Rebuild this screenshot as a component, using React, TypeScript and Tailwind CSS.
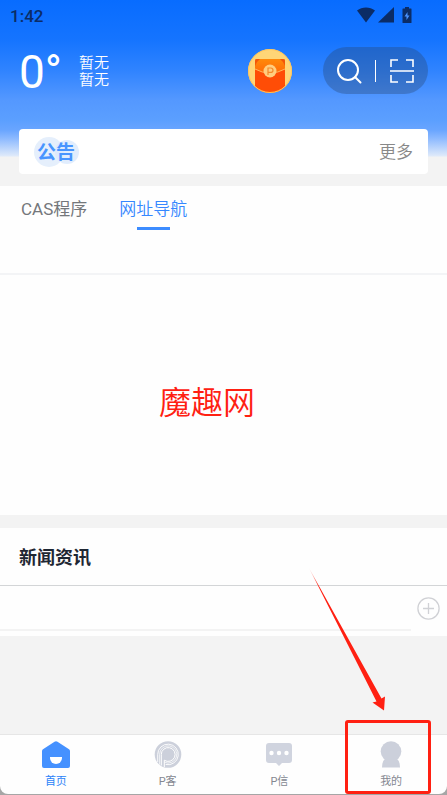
import type { ReactNode } from 'react';

function StatusBar() {
  return (
    <div className="flex h-8 items-center justify-between pl-[10px] pr-[35px] text-[#0b2c66]">
      <span className="text-[17px] leading-5 font-medium">1:42</span>
      <div className="flex items-center gap-[3px] pb-[2px]">
        <svg width="18" height="16" viewBox="0 0 18 16" fill="currentColor" aria-label="Wi-Fi">
          <path d="M0 3.600C5.200-.6 12.800-.6 18 3.600L9 15.500z" />
        </svg>
        <svg width="16" height="16" viewBox="0 0 16 16" fill="currentColor" aria-label="信号">
          <path d="M16 0v15.500H0z" />
        </svg>
        <svg className="ml-[5px]" width="10" height="16" viewBox="0 0 10 16" aria-label="电量">
          <path d="M3 0h4v1.500h2q.500 0 .500.500v13.500q0 .500-.500.500H1q-.500 0-.500-.500V2q0-.500.500-.500h2z" fill="currentColor" />
          <path d="M5.500 5L2.500 9.500h2V13l3-4.500h-2z" fill="#4b93ff" />
        </svg>
      </div>
    </div>
  );
}

function RedPacket() {
  return (
    <svg width="44" height="44" viewBox="0 0 44 44" aria-hidden="true">
      <defs>
        <linearGradient id="flap" x1="0" y1="0" x2="0" y2="1">
          <stop offset="0" stopColor="#ff8a0a" />
          <stop offset="1" stopColor="#ff6a08" />
        </linearGradient>
        <clipPath id="coin">
          <circle cx="22" cy="22" r="22" />
        </clipPath>
      </defs>
      <circle cx="22" cy="22" r="22" fill="#ffd677" />
      <g clipPath="url(#coin)">
        <path d="M7 12q0-2 2-2h26q2 0 2 2v25q0 7-15 7T7 37z" fill="#ff4d06" />
        <path d="M7 12q0-2 2-2h26q2 0 2 2v8q-7 4-15 4T7 20z" fill="url(#flap)" />
        <path d="M7 12q0-2 2-2h3l-3 3-2 4zM37 12q0-2-2-2h-3l3 3 2 4z" fill="#f2550a" />
        <path d="M7 20q7 4 15 4t15-4" fill="none" stroke="#ffb45c" strokeWidth="1" />
      </g>
      <circle cx="22" cy="22" r="6.500" fill="#ffce80" />
      <path d="M20 26v-7h2.800a2.200 2.200 0 0 1 0 4.400H20" fill="none" stroke="#f48a2c" strokeWidth="1.200" />
      <circle cx="22" cy="22" r="21.500" fill="none" stroke="#ffc55c" />
    </svg>
  );
}

function Header() {
  return (
    <header className="bg-[linear-gradient(180deg,#086cff_0px,#1574ff_40px,#2f83ff_70px,#5498ff_100px,#5b9fff_120px,#69a5ff_130px,#8ab8ff_138px,#dfeafa_156px,#f3f3f3_157px)] pb-3">
      <StatusBar />
      <div className="flex h-[97px] items-start pt-[15px] pr-[19px] pl-[19px]">
        <div className="w-10 text-[46px] leading-[50px] text-white">0°</div>
        <div className="mt-2 ml-5 text-[15px] leading-[17px] font-[350] text-white">
          <p>暂无</p>
          <p>暂无</p>
        </div>
        <button type="button" aria-label="红包" className="mt-[2px] mr-[31px] ml-auto">
          <RedPacket />
        </button>
        <div className="flex h-[47px] w-[105px] items-center justify-between rounded-full bg-[#28466e]/35 px-[13px]">
          <button type="button" aria-label="搜索">
            <svg width="26" height="26" viewBox="0 0 26 26" fill="none" stroke="#fff" strokeWidth="2">
              <circle cx="12" cy="12" r="10" />
              <path d="M19 19l5.500 5.500" strokeLinecap="round" />
            </svg>
          </button>
          <span className="h-[22px] w-px bg-white" />
          <button type="button" aria-label="扫一扫">
            <svg width="26" height="26" viewBox="0 0 26 26" fill="none" stroke="#fff" strokeWidth="1.600">
              <path d="M2 9V2h7M17 2h7v7M24 17v7h-7M9 24H2v-7M1 13h24" />
            </svg>
          </button>
        </div>
      </div>
      <div className="mx-[19px] flex h-[45px] items-center justify-between rounded-[4px] bg-white px-[15px]">
        <h2 className="relative isolate flex h-[30px] items-center px-[3px] pt-[2px] text-[19px] leading-6 font-bold text-[#4895ff]">
          <svg className="absolute top-0 left-0 -z-10" width="46" height="30" viewBox="0 0 46 30" aria-hidden="true">
            <circle cx="15" cy="15" r="15" fill="#e5effc" />
            <circle cx="33" cy="15" r="12" fill="#d9e8fc" fillOpacity=".8" />
          </svg>
          公告
        </h2>
        <a href="#notices" className="text-[17px] leading-6 font-[350] text-[#888]">更多</a>
      </div>
    </header>
  );
}

function Tabs() {
  return (
    <div className="flex h-[89px] items-start gap-8 border-b-2 border-[#f3f4f6] bg-[#fefefe] px-[21px] pt-[10px] text-[17px] leading-[26px]">
      <button type="button" className="text-[#74777b]">CAS程序</button>
      <button type="button" className="flex flex-col items-center gap-[5px] font-[350] text-[#3587ff]">
        网址导航
        <span className="h-[3px] w-[33px] bg-[#3c8cff]" />
      </button>
    </div>
  );
}

function News() {
  return (
    <section className="mt-[13px] bg-[#fefefe] pb-[5px]">
      <h2 className="border-b border-[#d3d5d7] px-[19px] pt-[17px] pb-[15px] text-[18px] leading-[25px] font-bold text-[#1e2733]">新闻资讯</h2>
      <div className="flex h-[45px] items-stretch">
        <div className="flex-1 border-b-2 border-[#f3f3f3]" />
        <button type="button" aria-label="添加" className="mr-[7px] ml-[6px] self-center">
          <svg width="23" height="23" viewBox="0 0 23 23" fill="none" stroke="#d0d1d5" strokeWidth="1.300">
            <circle cx="11.500" cy="11.500" r="10.600" />
            <path d="M11.500 6v11M6 11.500h11" />
          </svg>
        </button>
      </div>
    </section>
  );
}

function HomeIcon() {
  return (
    <svg width="28" height="28" viewBox="0 0 28 28" aria-hidden="true">
      <path d="M12.500.700q1.500-1 3 0L27 8.300q1 .700 1 2V25q0 2-2 2H2q-2 0-2-2V10.300q0-1.300 1-2z" fill="#4591ff" />
      <path d="M8 16h12v1a6 6 0 0 1-12 0z" fill="#fff" />
    </svg>
  );
}

function PIcon() {
  return (
    <svg width="28" height="28" viewBox="0 0 28 28" fill="none" aria-hidden="true">
      <circle cx="14" cy="13.500" r="13.300" fill="#ccd0db" />
      <path d="M3.700 21V13.500a10.300 10.300 0 1 1 8 10" stroke="#fff" strokeWidth=".9" />
      <path d="M5.600 23.500V13.500a8.600 8.600 0 1 1 4.700 7.600" stroke="#fff" strokeWidth=".7" />
      <path d="M7.300 24.500V13.500a6.900 6.900 0 1 1 3 5.700V26" stroke="#fff" strokeWidth="1" />
    </svg>
  );
}

function ChatIcon() {
  return (
    <svg width="28" height="28" viewBox="0 0 28 28" aria-hidden="true">
      <path d="M4 2h20q3 0 3 3v14q0 3-3 3h-7l-3 3-3-3H4q-3 0-3-3V5q0-3 3-3z" fill="#d0d4df" />
      <g fill="#fff">
        <circle cx="6.500" cy="12" r="2.200" />
        <circle cx="14" cy="12" r="2.200" />
        <circle cx="21.500" cy="12" r="2.200" />
      </g>
    </svg>
  );
}

function UserIcon() {
  return (
    <svg width="28" height="28" viewBox="0 0 28 28" fill="#ccd0db" aria-hidden="true">
      <circle cx="14" cy="10.500" r="10.300" />
      <path d="M8 18h12q3 2 3 8.500H5Q5 20 8 18z" />
    </svg>
  );
}

function NavItem({ label, icon, active = false, children }: { label: string; icon: ReactNode; active?: boolean; children?: ReactNode }) {
  return (
    <a
      href="#"
      className={`relative flex flex-1 flex-col items-center gap-1 pt-[6px] text-[11px] leading-[18px] ${active ? 'text-[#2c83f8]' : 'text-[#858891]'}`}
    >
      {icon}
      {label}
      {children}
    </a>
  );
}

// Red frame with an arrow pointing down at it
function Highlight() {
  return (
    <span className="pointer-events-none absolute -top-[15px] right-4 bottom-0 w-[86px] rounded-[3px] border-3 border-[#ff2012]">
      <svg className="absolute right-[18px] bottom-full mb-[3px]" width="120" height="160" viewBox="0 0 120 160">
        <defs>
          <linearGradient id="tail" gradientUnits="userSpaceOnUse" x1="19" y1="9" x2="94" y2="150">
            <stop offset="0" stopColor="#ff2012" stopOpacity=".2" />
            <stop offset=".12" stopColor="#ff2012" />
          </linearGradient>
        </defs>
        <path d="M19 8L91.500 138.500 95 136.500 94 150.500 82.500 142.500 86.500 141.500z" fill="url(#tail)" />
      </svg>
    </span>
  );
}

export default function App() {
  return (
    <div className="flex min-h-screen flex-col bg-[#f3f3f3] font-[Roboto,'Noto_Sans_CJK_SC',sans-serif]">
      <Header />
      <main className="flex-1">
        <Tabs />
        <section className="flex h-60 items-center justify-center bg-[#fefefe] pr-[33px]">
          <p className="mt-4 text-[32px] leading-10 font-[350] text-[#ff2012]">魔趣网</p>
        </section>
        <News />
      </main>
      <div className="bg-[#a6a6a6]">
        <div className="h-px bg-[#e6e6e6]" />
        <nav className="mb-px flex h-[59px] rounded-b-[8px] bg-[#fefefe]">
          <NavItem label="首页" icon={<HomeIcon />} active />
          <NavItem label="P客" icon={<PIcon />} />
          <NavItem label="P信" icon={<ChatIcon />} />
          <NavItem label="我的" icon={<UserIcon />}>
            <Highlight />
          </NavItem>
        </nav>
      </div>
    </div>
  );
}
